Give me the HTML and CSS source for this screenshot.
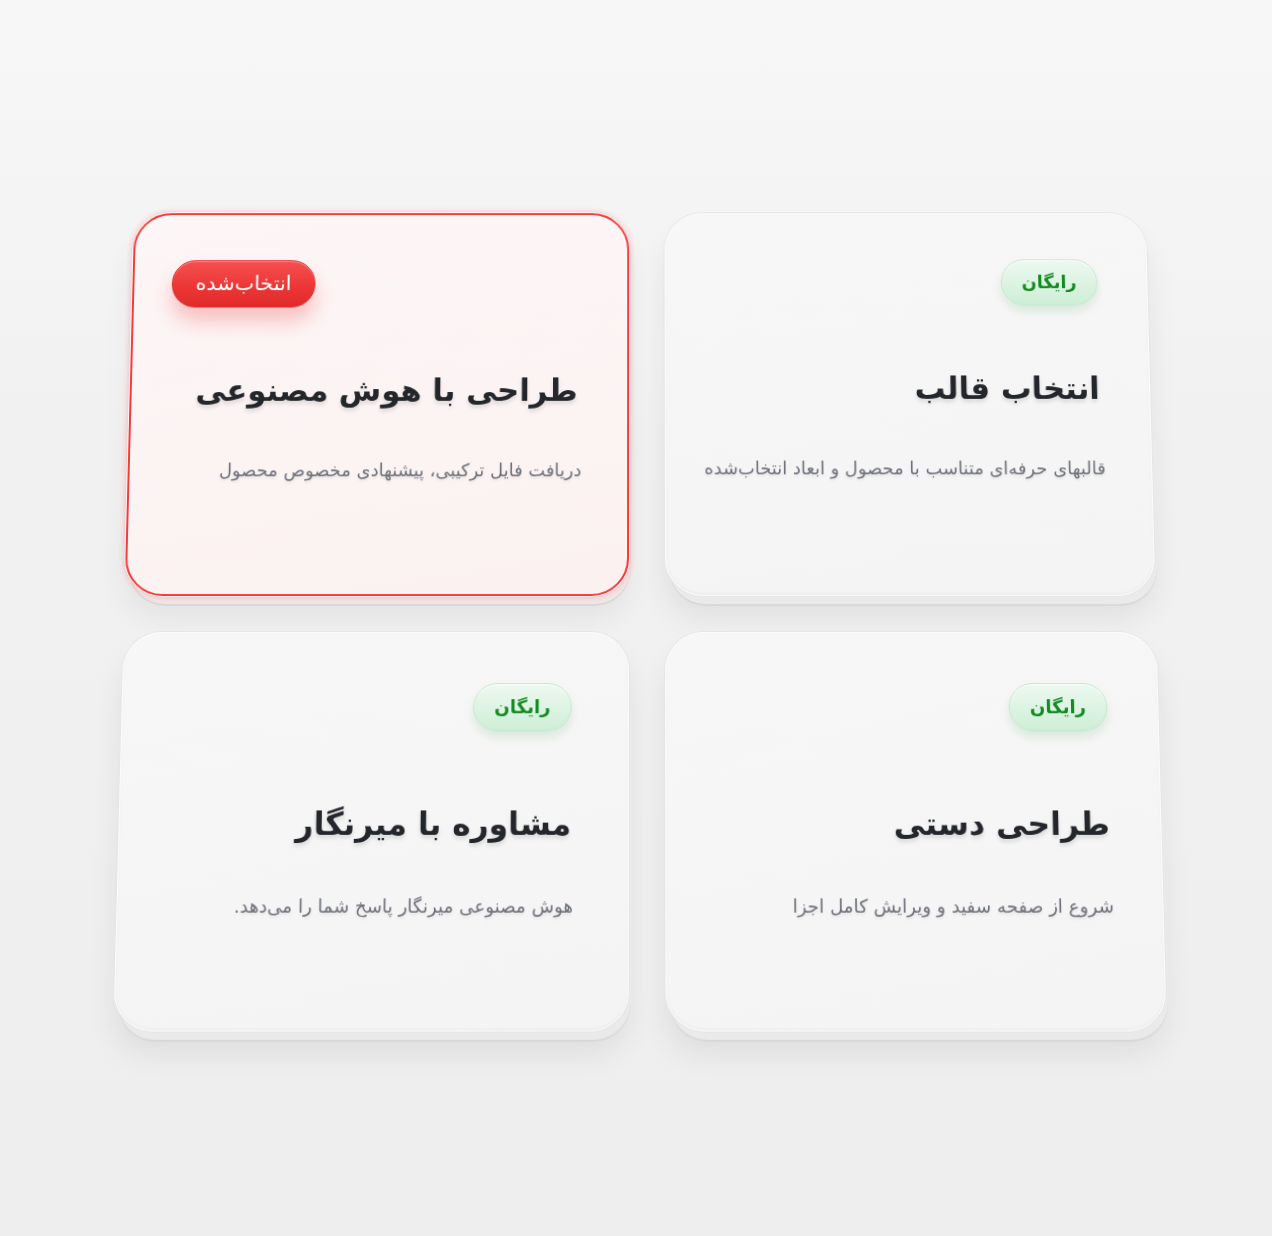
FILE: index.html
```html
<!DOCTYPE html>
<html lang="fa" dir="rtl">
<head>
<meta charset="utf-8">
<title>انتخاب روش طراحی</title>
<link rel="stylesheet" href="styles.css">
</head>
<body>
<main class="stage">
  <section class="grid">
    <article class="card">
      <span class="badge badge-free">رایگان</span>
      <h2 class="title">انتخاب قالب</h2>
      <p class="desc">قالبهای حرفه‌ای متناسب با محصول و ابعاد انتخاب‌شده</p>
    </article>
    <article class="card card-selected">
      <span class="badge badge-selected">انتخاب‌شده</span>
      <h2 class="title">طراحی با هوش مصنوعی</h2>
      <p class="desc">دریافت فایل ترکیبی، پیشنهادی مخصوص محصول</p>
    </article>
    <article class="card card-low">
      <span class="badge badge-free">رایگان</span>
      <h2 class="title">طراحی دستی</h2>
      <p class="desc">شروع از صفحه سفید و ویرایش کامل اجزا</p>
    </article>
    <article class="card card-low card-inset">
      <span class="badge badge-free">رایگان</span>
      <h2 class="title">مشاوره با میرنگار</h2>
      <p class="desc">هوش مصنوعی میرنگار پاسخ شما را می‌دهد.</p>
    </article>
  </section>
</main>
</body>
</html>
```

FILE: styles.css
```css
html, body {
  margin: 0;
  padding: 0;
}

body {
  width: 1272px;
  height: 1236px;
  overflow: hidden;
  background: linear-gradient(180deg, #f8f7f7 0%, #f2f1f1 35%, #efeeee 100%);
  font-family: "DejaVu Sans", "Noto Sans", sans-serif;
}

.stage {
  padding-top: 204px;
  display: flex;
  justify-content: center;
}

.grid {
  margin-left: 8px;
  width: 1032px;
  display: grid;
  grid-template-columns: 491px 505px;
  grid-template-rows: 392px 392px;
  column-gap: 36px;
  row-gap: 36px;
  transform: perspective(1400px) rotateX(4deg);
}

.card {
  box-sizing: border-box;
  padding: 47px 50px 0 38px;
  border-radius: 38px;
  background: linear-gradient(170deg, #f8f7f7 0%, #f5f4f4 100%);
  border: 1px solid #fbfbfb;
  box-shadow:
    0 0 0 1px #e6e5e5,
    inset 0 -2px 3px rgba(0,0,0,0.03),
    3px 9px 0 -1px #ebeaea,
    3px 11px 0 -1px #d9d8d8,
    0 22px 30px rgba(0,0,0,0.07);
  display: flex;
  flex-direction: column;
  align-items: flex-start;
}

.card-low {
  padding-top: 50px;
}

.card-inset {
  padding-right: 56px;
}

.card-selected {
  border: 2px solid #f23c3b;
  background: linear-gradient(170deg, #fdf6f6 0%, #fbf1f1 100%);
  box-shadow:
    0 0 0 1px #fbf3f3,
    0 0 6px 1px rgba(240,60,60,0.30),
    3px 9px 0 -1px #eee8e8,
    3px 11px 0 -1px #ddd6d6,
    0 22px 30px rgba(0,0,0,0.06);
}

.badge {
  box-sizing: border-box;
  display: inline-flex;
  align-items: center;
  justify-content: center;
  height: 48px;
  border-radius: 24px;
  line-height: 1;
  white-space: nowrap;
}

.badge-free {
  width: 98px;
  font-size: 18px;
  color: #168a24;
  font-weight: bold;
  background: linear-gradient(180deg, #edf9f0 0%, #dcf3e2 55%, #cdeed6 100%);
  border: 1px solid #c3e8cc;
  box-shadow:
    inset 0 1px 0 #ffffff,
    0 6px 10px rgba(90,170,110,0.18);
}

.badge-selected {
  align-self: flex-end;
  width: 146px;
  height: 49px;
  font-size: 21px;
  color: #ffffff;
  background: linear-gradient(180deg, #f55050 0%, #ec3434 60%, #e02a2a 100%);
  border: 1px solid #e22d2d;
  box-shadow:
    inset 0 1px 0 rgba(255,255,255,0.35),
    0 14px 20px rgba(240,70,70,0.30);
}

.title {
  margin: 62px 0 0;
  font-size: 31px;
  font-weight: bold;
  line-height: 46px;
  white-space: nowrap;
  color: #23262b;
  text-shadow: 0 3px 4px rgba(0,0,0,0.12);
}

.card-low .title {
  margin-top: 68px;
}

.desc {
  margin: 46px -4px 0 0;
  font-size: 18px;
  line-height: 26px;
  white-space: nowrap;
  color: #6d717a;
  text-shadow: 0 2px 3px rgba(0,0,0,0.08);
}

.card-low .desc {
  margin-top: 45px;
  margin-right: -2px;
}
```
